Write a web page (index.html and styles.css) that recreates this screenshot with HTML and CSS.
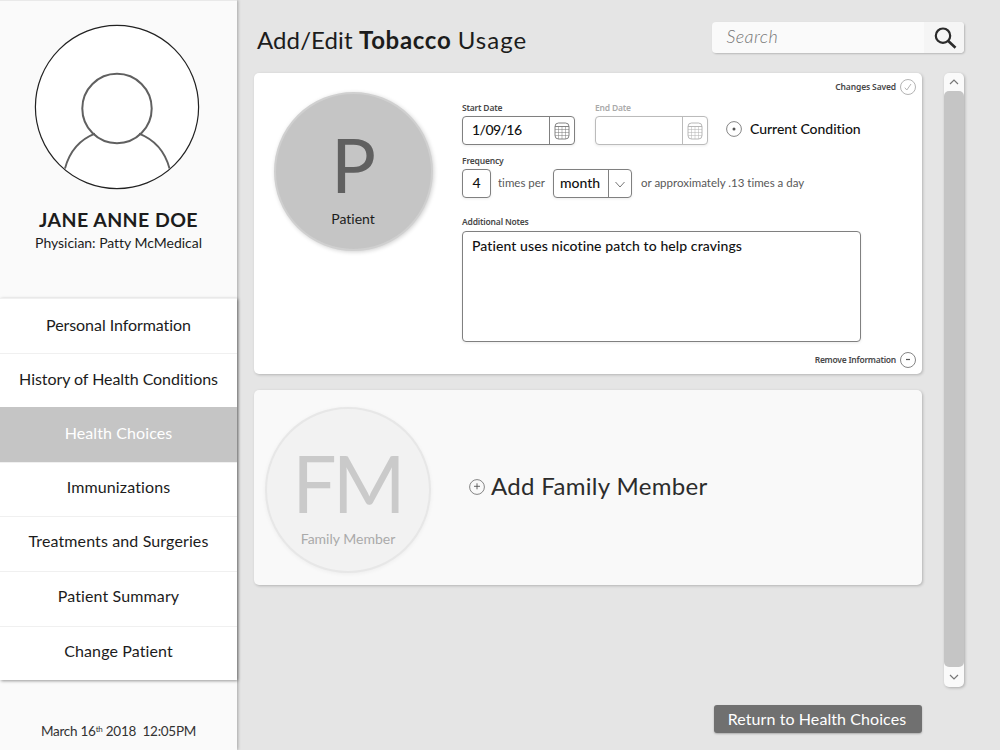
FILE: index.html
```html
<!DOCTYPE html>
<html lang="en">
<head>
<meta charset="utf-8">
<title>Add/Edit Tobacco Usage</title>
<link rel="stylesheet" href="styles.css">
</head>
<body>
<div class="app">
  <aside class="sidebar">
    <div class="profile">
      <svg class="avatar" width="166" height="166" viewBox="0 0 166 166" fill="none">
        <circle cx="83" cy="83" r="81.6" fill="#fff" stroke="#222" stroke-width="1.2"/>
        <path d="M31 144.500C36 126 46 115.500 61 109.700M105 109.700C120 115.500 130.500 126 135.500 144.500" stroke="#606060" stroke-width="1.9"/>
        <circle cx="83" cy="84.500" r="34.700" stroke="#606060" stroke-width="2"/>
      </svg>
      <div class="name">JANE ANNE DOE</div>
      <div class="physician">Physician: Patty McMedical</div>
    </div>
    <nav class="nav">
      <a class="nav-item">Personal Information</a>
      <a class="nav-item">History of Health Conditions</a>
      <a class="nav-item active">Health Choices</a>
      <a class="nav-item wide">Immunizations</a>
      <a class="nav-item wide">Treatments and Surgeries</a>
      <a class="nav-item wide">Patient Summary</a>
      <a class="nav-item wide">Change Patient</a>
    </nav>
    <div class="clock">March 16<sup>th</sup> 2018&nbsp; 12:05PM</div>
  </aside>
  <main class="main">
    <header class="topbar">
      <h1 class="title">Add/Edit <b>Tobacco</b> <span>Usage</span></h1>
      <div class="search">
        <div class="search-field">Search</div>
        <div class="search-button">
          <svg width="24" height="24" viewBox="0 0 24 24" fill="none" stroke="#2b2b2b"><circle cx="10" cy="8.700" r="7.200" stroke-width="2.200"/><path d="M15 13.700L22.500 20.800" stroke-width="2.600"/></svg>
        </div>
      </div>
    </header>
    <div class="content">
      <div class="cards">
        <section class="card patient">
          <div class="circle circle-p"><div class="initial">P</div><div class="role">Patient</div></div>
          <div class="form">
            <div class="row dates">
              <div class="field start"><div class="label">Start Date</div>
                <div class="box date"><div class="value">1/09/16</div><div class="addon">
                  <svg width="16" height="18" viewBox="0 0 16 18" fill="none" stroke="#777" stroke-width=".5"><rect x="1" y="1" width="14" height="16" rx="3.500" stroke-width=".9"/><path d="M1 4.500H15" stroke-width=".9"/><path d="M1 7.500H15M1 10.500H15M1 13.500H15M4.500 4.500V17M8 4.500V17M11.500 4.500V17"/></svg></div></div></div>
              <div class="field end"><div class="label">End Date</div>
                <div class="box date"><div class="value"></div><div class="addon">
                  <svg width="16" height="18" viewBox="0 0 16 18" fill="none" stroke="#b0b0b0" stroke-width=".5"><rect x="1" y="1" width="14" height="16" rx="3.500" stroke-width=".9"/><path d="M1 4.500H15" stroke-width=".9"/><path d="M1 7.500H15M1 10.500H15M1 13.500H15M4.500 4.500V17M8 4.500V17M11.500 4.500V17"/></svg></div></div></div>
              <div class="current"><svg width="18" height="18" viewBox="0 0 18 18"><circle cx="9" cy="9" r="7.400" fill="none" stroke="#777" stroke-width=".9"/><circle cx="9" cy="9" r="1.500" fill="#555"/></svg><span>Current Condition</span></div>
            </div>
            <div class="label frequency-label">Frequency</div>
            <div class="row frequency">
              <div class="box count">4</div>
              <div class="hint times">times per</div>
              <div class="box period"><div class="value">month</div><div class="addon"><svg width="12" height="8" viewBox="0 0 12 8" fill="none" stroke="#777"><path d="M1.500 1L6 6L10.500 1"/></svg></div></div>
              <div class="hint approx">or approximately .13 times a day</div>
            </div>
            <div class="label notes-label">Additional Notes</div>
            <div class="box notes">Patient uses nicotine patch to help cravings</div>
          </div>
          <div class="side">
            <div class="status"><span>Changes Saved</span><svg width="18" height="18" viewBox="0 0 18 18" fill="none" stroke="#b4b4b4"><circle cx="9" cy="9" r="7.500"/><path d="M5.800 9.700L7.800 12L12 6"/></svg></div>
            <div class="status remove"><span>Remove Information</span><svg width="18" height="18" viewBox="0 0 18 18" fill="none" stroke="#777"><circle cx="9" cy="9" r="7.500" stroke-width=".9"/><path d="M7 8.500H11" stroke="#555" stroke-width="1.200"/></svg></div>
          </div>
        </section>
        <section class="card family">
          <div class="circle circle-fm"><div class="initial">FM</div><div class="role">Family Member</div></div>
          <div class="add"><svg width="18" height="18" viewBox="0 0 18 18" fill="none" stroke="#777" stroke-width=".9"><circle cx="9" cy="9" r="7.400"/><path d="M6 8.300H12M9 5.300V11.300" stroke="#555"/></svg><span>Add Family Member</span></div>
        </section>
      </div>
      <div class="scrollbar">
        <div class="arrow up"><svg width="12" height="8" viewBox="0 0 12 8" fill="none" stroke="#777" stroke-width="1.200"><path d="M2 6L6 2L10 6"/></svg></div>
        <div class="thumb"></div>
        <div class="arrow down"><svg width="12" height="8" viewBox="0 0 12 8" fill="none" stroke="#777" stroke-width="1.200"><path d="M2 2L6 6L10 2"/></svg></div>
      </div>
    </div>
    <a class="return">Return to Health Choices</a>
  </main>
</div>
</body>
</html>
```
FILE: styles.css
```css
* { box-sizing: border-box; }
body { margin: 0; background: #e5e5e5; color: #1c1c1c; font-family: Lato, sans-serif; font-variant-ligatures: none; }
svg { display: block; flex: none; }
.app { display: flex; width: 1000px; height: 750px; overflow: hidden; }
.sidebar { width: 237px; flex: none; background: #fafafa; box-shadow: 1px 0 3px rgba(0,0,0,.28); border-top: 1px solid #e9e9e9; display: flex; flex-direction: column; text-align: center; z-index: 1; }
.profile { height: 297px; padding-top: 23px; }
.avatar { margin-left: 34px; }
.name { font-size: 19.500px; font-weight: 700; line-height: 24px; margin-top: 18px; letter-spacing: .43px; }
.physician { font-size: 14px; line-height: 20px; margin-top: 1px; letter-spacing: -.03px; }
.nav { box-shadow: 1px 1px 3px rgba(0,0,0,.4); background: #fff; }
.nav-item { display: block; height: 54.600px; line-height: 52px; font-size: 16px; letter-spacing: -.06px; border-top: 1px solid #f0f0f0; }
.nav-item:nth-child(2) { line-height: 50px; }
.nav-item.wide { letter-spacing: .12px; line-height: 48px; }
.nav-item.active { background: #c5c5c5; color: #fff; border-top-color: #c5c5c5; letter-spacing: .1px; line-height: 50px; }
.clock { font-size: 13.500px; line-height: 18px; margin-top: 42px; letter-spacing: -.25px; color: #333; }
.clock sup { font-size: 8px; line-height: 0; vertical-align: 4px; }
.main { flex: 1; padding-left: 17px; }
.topbar { display: flex; height: 73px; padding-top: 22px; }
.title { margin: 0; padding-left: 3px; width: 457.500px; font-size: 24px; line-height: 35px; font-weight: 400; letter-spacing: .1px; }
.title b { letter-spacing: .7px; }
.title span { letter-spacing: 1.05px; }
.search { display: flex; width: 252.500px; height: 31px; border-radius: 4px; background: #fafafa; box-shadow: 1px 1px 2px rgba(0,0,0,.2); overflow: hidden; }
.search-field { flex: 1; padding-left: 15px; font-size: 18px; line-height: 29px; font-weight: 300; font-style: italic; letter-spacing: .4px; color: #777; }
.search-button { width: 40px; background: #f5f5f5; padding: 5px 0 0 9px; }
.content { display: flex; gap: 22px; height: 615px; }
.cards { width: 668px; }
.card { display: flex; border-radius: 5px; box-shadow: 1px 1px 3px rgba(0,0,0,.22); }
.patient { height: 301px; background: #fff; }
.circle { border-radius: 50%; text-align: center; flex: none; }
.circle-p { width: 159px; height: 159px; margin: 19px 0 0 20px; background: #c5c5c5; border: 2px solid #d0d0d0; box-shadow: 1px 1px 4px rgba(0,0,0,.18); }
.circle-p .initial { font-size: 75px; line-height: 90px; margin-top: 25px; color: #606060; }
.circle-p .role { font-size: 14px; line-height: 18px; margin-top: 1px; padding-right: 1px; }
.form { width: 400px; margin: 28px 0 0 29px; flex: none; }
.label { font-family: "Noto Sans", sans-serif; font-size: 8.500px; font-weight: 600; line-height: 13px; letter-spacing: -.18px; color: #484848; }
.row { display: flex; }
.box { border: 1px solid #808080; border-radius: 4px; background: #fff; color: #111; box-shadow: 0 1px 3px rgba(0,0,0,.08); font-size: 14px; font-weight: 500; }
.date { display: flex; width: 113px; height: 29px; margin-top: 2px; }
.date .value { width: 87px; padding-left: 9px; line-height: 26px; letter-spacing: -.55px; border-right: 1px solid #808080; }
.date .addon { padding: 5px 0 0 4px; }
.end { margin-left: 20px; }
.end .label { color: #aaa; }
.end .box, .end .value { border-color: #bbb; }
.current { display: flex; align-items: center; gap: 7px; height: 18px; margin: 19px 0 0 17px; font-size: 14px; line-height: 18px; font-weight: 500; letter-spacing: -.04px; color: #111; white-space: nowrap; }
.frequency-label { margin-top: 9px; }
.frequency { height: 29px; margin-top: 2px; }
.count { width: 29px; text-align: center; line-height: 26px; }
.hint { font-size: 11.500px; line-height: 27px; color: #585858; white-space: nowrap; }
.times { width: 62px; padding-left: 7px; }
.period { display: flex; width: 79px; }
.period .value { width: 55px; padding-left: 6px; line-height: 26px; border-right: 1px solid #808080; }
.period .addon { padding: 11px 0 0 5px; }
.approx { padding-left: 9px; }
.notes-label { margin-top: 17px; }
.notes { width: 399px; height: 111px; margin-top: 3px; padding: 4px 9px; line-height: 19px; letter-spacing: .09px; }
.side { flex: 1; display: flex; flex-direction: column; justify-content: space-between; align-items: flex-end; padding: 5px 5px 5px 0; margin-left: -90px; }
.status { display: flex; align-items: center; gap: 3px; font: 600 8.500px/18px "Noto Sans", sans-serif; letter-spacing: -.14px; color: #484848; white-space: nowrap; }
.status.remove { letter-spacing: -.25px; }
.family { height: 195px; margin-top: 16px; background: #f9f9f9; }
.circle-fm { width: 166px; height: 166px; margin: 17px 0 0 11px; background: #f2f2f2; border: 2px solid #e7e7e7; box-shadow: 0 1px 4px rgba(0,0,0,.05); color: #aaa; }
.circle-fm .initial { font-size: 78.500px; line-height: 90px; margin-top: 29px; letter-spacing: -4px; padding-right: 2px; color: #cacaca; }
.circle-fm .role { font-size: 14px; line-height: 18px; margin-top: 2px; }
.add { display: flex; align-items: center; gap: 5px; height: 36px; margin: 78px 0 0 37px; font-size: 24px; line-height: 30px; letter-spacing: .32px; color: #2c2c2c; }
.add svg { margin-top: 2px; }
.add span { padding-bottom: 1px; }
.scrollbar { width: 20px; height: 614px; border-radius: 5px; background: #fafafa; box-shadow: 1px 1px 3px rgba(0,0,0,.25); }
.arrow { padding-left: 4px; }
.up { height: 18px; padding-top: 5px; }
.thumb { height: 576px; border-radius: 5px; background: #c5c5c5; }
.down { padding-top: 6px; }
.return { display: block; width: 208px; height: 28px; margin: 17px 0 0 460px; padding-right: 2px; border-radius: 3px; background: #707070; color: #fff; text-align: center; font-size: 16px; line-height: 28px; letter-spacing: .08px; box-shadow: 0 1px 2px rgba(0,0,0,.25); }
```
